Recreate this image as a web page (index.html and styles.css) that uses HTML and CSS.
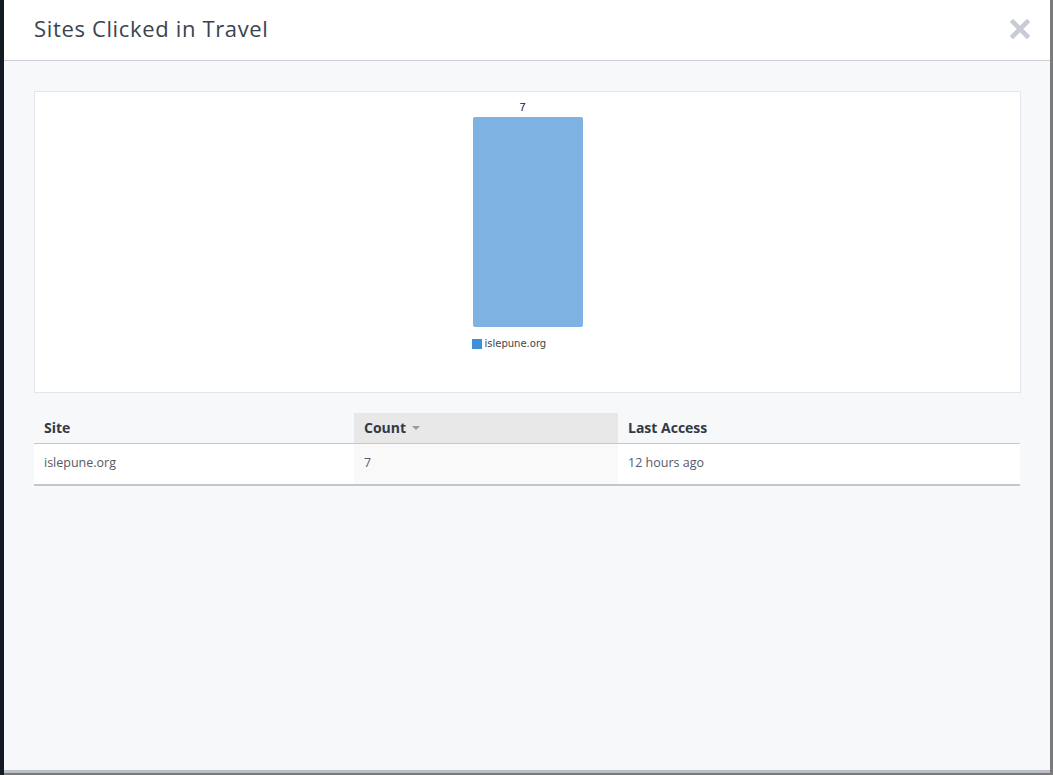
FILE: index.html
```html
<!DOCTYPE html>
<html>
<head>
<meta charset="utf-8">
<link rel="stylesheet" href="styles.css">
</head>
<body>
<div class="screen">
  <div class="backdrop-left"></div>
  <div class="modal">
    <div class="modal-header">
      <h1 class="modal-title">Sites Clicked in Travel</h1>
      <button class="close" aria-label="Close">
        <svg width="20" height="20" viewBox="0 0 20 20"><path d="M3 3 L17 17 M17 3 L3 17" stroke="#c7cbd3" stroke-width="4.6" stroke-linecap="square" fill="none"/></svg>
      </button>
    </div>
    <div class="modal-body">
      <div class="chart-panel">
        <div class="chart">
          <div class="bar-value">7</div>
          <div class="bar"></div>
          <div class="legend">
            <span class="legend-swatch"></span>
            <span class="legend-label">islepune.org</span>
          </div>
        </div>
      </div>
      <table class="sites">
        <thead>
          <tr>
            <th class="col-site">Site</th>
            <th class="col-count sorted">Count <span class="caret"></span></th>
            <th class="col-last">Last Access</th>
          </tr>
        </thead>
        <tbody>
          <tr>
            <td>islepune.org</td>
            <td class="sorted">7</td>
            <td>12 hours ago</td>
          </tr>
        </tbody>
      </table>
    </div>
  </div>
  <div class="backdrop-right"></div>
</div>
</body>
</html>
```
FILE: styles.css
```css
html, body {
  margin: 0;
  padding: 0;
}
body {
  background: #7a7a7a;
  font-family: "Open Sans", "Noto Sans", sans-serif;
  overflow: hidden;
}
.screen {
  display: flex;
  height: 775px;
  width: 1053px;
  align-items: flex-start;
}
.backdrop-left {
  width: 4px;
  height: 775px;
  background: #141a21;
  flex: none;
}
.backdrop-right {
  flex: 1;
  height: 775px;
  background: #7b7b7b;
}
.modal {
  width: 1046px;
  height: 770px;
  flex: none;
  background: #f7f8fa;
  border-bottom: 3px solid #b9bec8;
  display: flex;
  flex-direction: column;
}
.modal-header {
  height: 60px;
  background: #ffffff;
  border-bottom: 1px solid #c9ccd5;
  display: flex;
  align-items: center;
  justify-content: space-between;
  padding: 0 20px 0 30px;
  flex: none;
}
.modal-title {
  margin: 0;
  font-size: 22px;
  font-weight: 400;
  color: #3c4350;
  letter-spacing: 0.65px;
  padding-bottom: 4px;
}
.close {
  border: 0;
  background: transparent;
  padding: 0;
  width: 20px;
  height: 20px;
  display: flex;
  margin-bottom: 2px;
}
.modal-body {
  padding: 30px 29px 0 30px;
  display: flex;
  flex-direction: column;
}
.chart-panel {
  background: #ffffff;
  border: 1px solid #e3e6ea;
  height: 300px;
  display: flex;
  justify-content: center;
}
.chart {
  width: 110px;
  display: flex;
  flex-direction: column;
  padding-top: 9px;
}
.bar-value {
  font-family: "Liberation Sans", Arial, sans-serif;
  font-size: 11px;
  line-height: 13px;
  height: 13px;
  color: #111;
  text-align: center;
  padding-right: 10px;
  margin-bottom: 3px;
}
.bar {
  height: 210px;
  background: #7db2e3;
  border-radius: 2px;
}
.legend {
  display: flex;
  align-items: center;
  margin-top: 12px;
  margin-left: -1px;
  gap: 3px;
}
.legend-swatch {
  width: 10px;
  height: 10px;
  background: #3e8fd8;
  flex: none;
}
.legend-label {
  font-family: "DejaVu Sans", "Liberation Sans", sans-serif;
  font-size: 10px;
  line-height: 10px;
  color: #444;
  white-space: nowrap;
}
.sites {
  margin-top: 20px;
  width: 986px;
  border-collapse: collapse;
  table-layout: fixed;
  border-bottom: 2px solid #c3c5cf;
}
.sites th {
  height: 28px;
  padding: 0 10px 2px;
  text-align: left;
  font-size: 14px;
  font-weight: 700;
  color: #333a44;
  border-bottom: 1px solid #c6c8d0;
  vertical-align: middle;
}
.sites th.sorted {
  background: #e8e8e8;
}
.col-site { width: 300px; }
.col-count { width: 244px; }
.caret {
  display: inline-block;
  width: 0;
  height: 0;
  border-left: 4px solid transparent;
  border-right: 4px solid transparent;
  border-top: 4px solid #999;
  vertical-align: middle;
  margin-left: 2px;
  margin-bottom: 2px;
}
.sites td {
  height: 37px;
  padding: 0 10px 3px;
  background: #ffffff;
  font-size: 12.5px;
  color: #555a63;
  vertical-align: middle;
}
.sites td.sorted {
  background: #f9f9f9;
}
```
